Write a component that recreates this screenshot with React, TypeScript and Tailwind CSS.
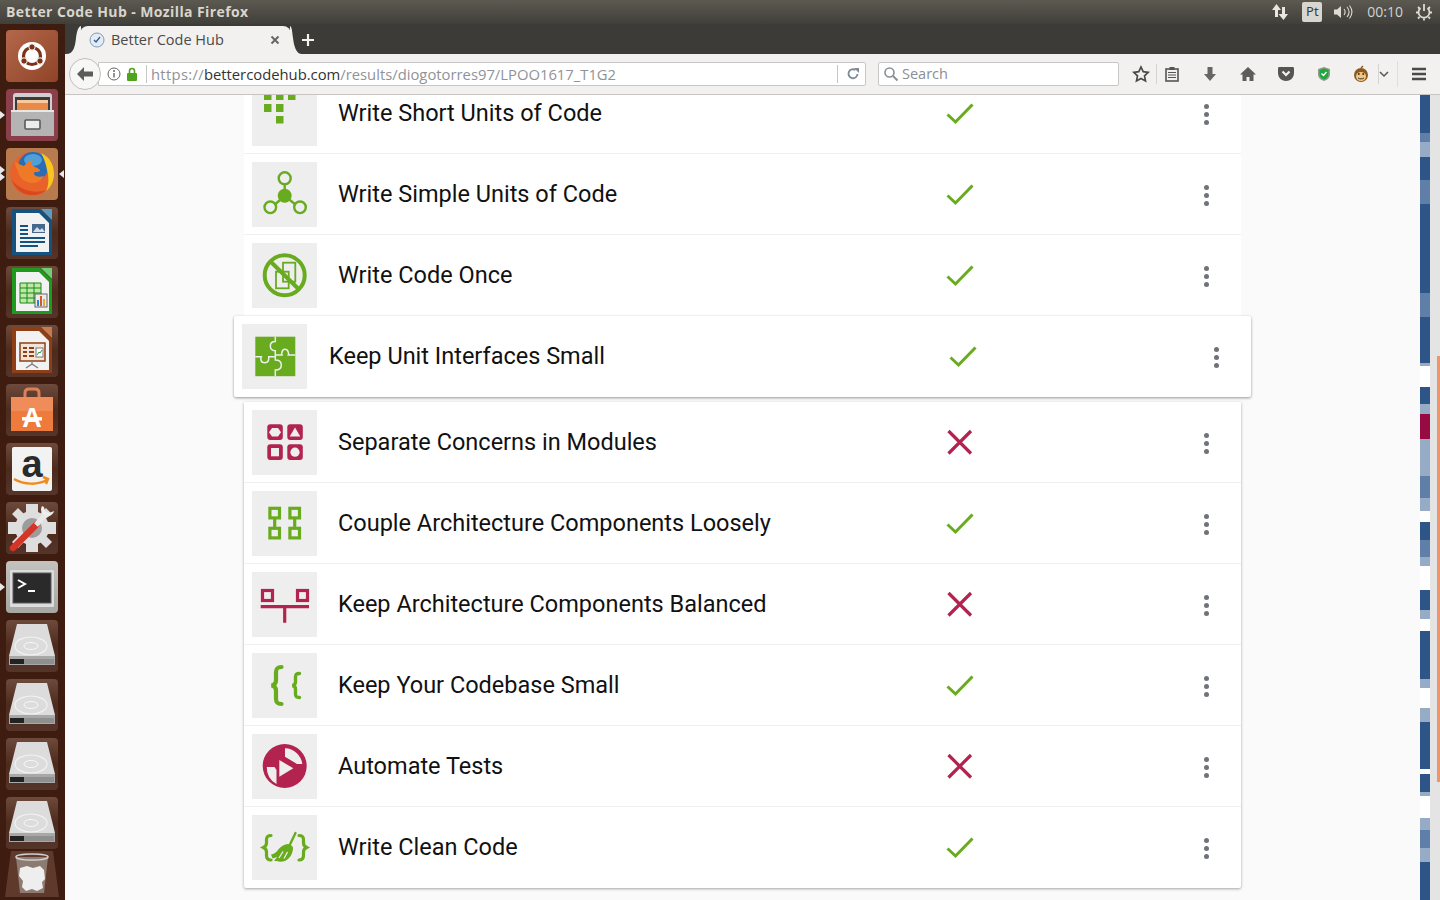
import React from "react";

const G = "#69ab1e";
const R = "#b3234f";
const B = "#eeeeee";

const seg: [string, number][] = [
  ["#2e5587", 38], ["#5f7fa8", 9], ["#96abc6", 15], ["#2e5587", 23], ["#5f7fa8", 24], ["#2e5587", 89], ["#5f7fa8", 24], ["#2e5587", 46], ["#96abc6", 3], ["#ffffff", 21], ["#2e5587", 17], ["#96abc6", 10], ["#970a42", 25], ["#96abc6", 37], ["#5f7fa8", 22], ["#96abc6", 13], ["#ffffff", 11], ["#2e5587", 18], ["#5f7fa8", 17], ["#96abc6", 9], ["#ffffff", 24], ["#2e5587", 20], ["#96abc6", 9], ["#ffffff", 12], ["#2e5587", 48], ["#96abc6", 9], ["#ffffff", 20], ["#96abc6", 14], ["#2e5587", 47], ["#ffffff", 5], ["#2e5587", 18], ["#96abc6", 4], ["#ffffff", 22], ["#96abc6", 12], ["#5f7fa8", 18], ["#96abc6", 14], ["#2e5587", 38],
];

function Svg({ children, s = 65 }: { children: React.ReactNode; s?: number }) {
  return <svg width={s} height={s} viewBox={`0 0 ${s} ${s}`} className="block">{children}</svg>;
}

const IShort = () => (
  <Svg>
    <g fill={G}>
      <rect x="12" y="11" width="7.5" height="8" /><rect x="24" y="11" width="7.5" height="8" /><rect x="36" y="11" width="7.5" height="8" />
      <rect x="12" y="23" width="7.5" height="8" /><rect x="24" y="23" width="7.5" height="8" /><rect x="24" y="35" width="7.5" height="7.5" />
    </g>
  </Svg>
);
const ISimple = () => (
  <Svg>
    <g stroke={G} strokeWidth="2.4" fill="none">
      <path d="M32.7 22.5V34M32.7 34L22.8 42.5M32.7 34L43.5 42.5" />
      <circle cx="32.7" cy="16.3" r="6" /><circle cx="18.3" cy="45.3" r="5.8" /><circle cx="48" cy="45.3" r="5.8" />
    </g>
    <circle cx="32.7" cy="33.7" r="7" fill={G} />
  </Svg>
);
const IOnce = () => (
  <Svg>
    <g stroke={G} fill="none">
      <rect x="31" y="19.7" width="12.3" height="19" strokeWidth="1.8" />
      <rect x="24" y="28.7" width="12.7" height="16.6" strokeWidth="1.8" />
      <circle cx="32.7" cy="32.3" r="20" strokeWidth="4" />
      <path d="M18.5 18.5L47 46.5" strokeWidth="4" />
    </g>
  </Svg>
);
const IPuzzle = () => (
  <Svg>
    <rect x="13.3" y="12.7" width="40" height="39.5" fill={G} />
    <path d="M33.3 12.7V17.5c-1.500 0-5 .5-5 4.500s3.500 4.700 5 4.700V36c1.500 0 6 .5 6 5s-4.500 5-6 5v6.200M13.300 32.700h6c-.5 1-1.500 6 3.400 6s4-5 4-6h6.600M33.300 31h6.700c-.5-1-.5-5.700 3-5.700s3.800 4.700 3.300 5.700h7" fill="none" stroke={B} strokeWidth="1.500" />
  </Svg>
);
const IModules = () => (
  <Svg>
    <rect x="15.300" y="14.300" width="15.500" height="15.700" rx="3" fill={R} />
    <rect x="35.300" y="14.300" width="15.500" height="15.700" rx="3" fill={R} />
    <rect x="15.300" y="34.300" width="15.500" height="15.700" rx="3" fill={R} />
    <rect x="35.300" y="34.300" width="15.500" height="15.700" rx="3" fill={R} />
    <path d="M20 18h6l3 4.200-3 4.200h-6l-3-4.200z" fill={B} />
    <path d="M43 17.500l5.300 9h-10.600z" fill={B} />
    <rect x="19" y="38" width="8" height="8.300" fill={B} />
    <circle cx="43" cy="42.200" r="4.600" fill={B} />
  </Svg>
);
const ICouple = () => (
  <Svg>
    <g stroke={G} strokeWidth="3.200" fill="none">
      <rect x="17.900" y="17.300" width="9.600" height="9.600" />
      <rect x="37.900" y="17.300" width="9.600" height="9.600" />
      <rect x="17.900" y="37.300" width="9.600" height="9.600" />
      <rect x="37.900" y="37.300" width="9.600" height="9.600" />
      <path d="M22.700 27V37M42.700 27V37" />
    </g>
  </Svg>
);
const IBalanced = () => (
  <Svg>
    <g stroke={R} fill="none">
      <rect x="10.500" y="18.500" width="10" height="10" strokeWidth="3.200" />
      <rect x="45.500" y="18.500" width="10" height="10" strokeWidth="3.200" />
      <path d="M8.700 34.700H57M32.700 35V50.700" strokeWidth="3.200" />
    </g>
  </Svg>
);
const IBraces = () => (
  <Svg>
    <g stroke={G} fill="none" strokeLinecap="round">
      <path d="M29.500 14c-4.500 0-5.500 1.500-5.500 5.500v8c0 3-1.500 4.500-4.500 5 3 .5 4.500 2 4.500 5v8c0 4 1 5.500 5.500 5.500" strokeWidth="4.200" />
      <path d="M47.500 20.500c-3 0-4 1-4 3.500v5c0 2-1 3-3 3.500 2 .5 3 1.500 3 3.500v5c0 2.500 1 3.500 4 3.500" strokeWidth="3.400" />
    </g>
  </Svg>
);
const ITests = () => (
  <Svg>
    <circle cx="32.700" cy="32" r="22" fill={R} />
    <path d="M33 14.300A18 18 0 0 1 50.300 30L45 30L33 22.700z" fill={B} />
    <path d="M14.800 33H22.500L24.500 36V50A18 18 0 0 1 14.800 33z" fill={B} />
    <path d="M27.300 26L41.300 34.300L27.300 42.700z" fill={B} />
  </Svg>
);
const IClean = () => (
  <Svg>
    <g stroke={G} fill="none" strokeLinecap="round" strokeWidth="3.200">
      <path d="M19 20.500c-3 0-4.500 1-4.500 4v3.500c0 2-1 3.500-3 4.500 2 1 3 2.500 3 4.500v3.500c0 3 1.500 4.500 4.500 4.500" />
      <path d="M47 20.500c3 0 4.500 1 4.500 4v3.500c0 2 1 3.500 3 4.500-2 1-3 2.500-3 4.500v3.500c0 3-1.500 4.500-4.500 4.500" />
      <path d="M43.500 18L37 31.500" strokeWidth="2.400" />
    </g>
    <path d="M36 29c2.500 .5 5 2 5 4 0 5-3 11-8 13-3 1-8 1-11-.5l3.500-3.500-5 1.500-1.500-4c3-.5 5-2 6.500-4 3-4 7-6.500 10.500-6.500z" fill={G} />
    <path d="M31 36.500l-4 6.500M35.500 37l-3.500 6.500" stroke={B} strokeWidth="1.300" />
  </Svg>
);

function Check() {
  return (
    <svg width="28" height="22" viewBox="0 0 28 22" className="block translate-y-[1px]">
      <path d="M1.500 11.500L9.500 19L26.500 1.500" stroke={G} strokeWidth="3" fill="none" />
    </svg>
  );
}
function Cross() {
  return (
    <svg width="28" height="26" viewBox="0 0 28 26" className="block">
      <path d="M2.500 2L25 24.500M25 2L2.500 24.500" stroke={R} strokeWidth="3.200" fill="none" />
    </svg>
  );
}
function Dots() {
  return (
    <div className="flex flex-col gap-[3px] translate-y-[1px]">
      <span className="w-[5px] h-[5px] rounded-full bg-[#6f7378]" />
      <span className="w-[5px] h-[5px] rounded-full bg-[#6f7378]" />
      <span className="w-[5px] h-[5px] rounded-full bg-[#6f7378]" />
    </div>
  );
}

function Row({ icon, label, ok, last }: { icon: React.ReactNode; label: string; ok: boolean; last?: boolean }) {
  return (
    <div className={`flex items-center h-[81px] pl-2 border-b ${last ? "border-transparent" : "border-[#f0f0f0]"}`}>
      <div className="w-[65px] h-[65px] bg-[#eeeeee] shrink-0">{icon}</div>
      <div className="ml-[21px] w-[608px] shrink-0 pt-[2px] text-[23.500px] text-[#111111] font-['Roboto',sans-serif]">{label}</div>
      <div className="w-[28px] shrink-0 flex justify-center">{ok ? <Check /> : <Cross />}</div>
      <div className="ml-[230px]"><Dots /></div>
    </div>
  );
}

/* ---------- launcher art ---------- */
const Pip = ({ cls }: { cls: string }) => <span className={`absolute w-0 h-0 border-y-[4px] border-y-transparent ${cls}`} />;
const Tile = ({ cls, children, pips }: { cls: string; children: React.ReactNode; pips?: React.ReactNode }) => (
  <div className={`relative w-[52px] h-[52px] rounded-[4px] flex items-center justify-center shrink-0 ${cls}`}>{children}{pips}</div>
);
const dark = "bg-[linear-gradient(180deg,#6d4a3c_0%,#4c2a1c_50%,#55352a_100%)]";

const Ubuntu = () => (
  <svg width="52" height="52" viewBox="0 0 52 52">
    <circle cx="26" cy="26" r="14" fill="#fff" />
    <circle cx="26" cy="26" r="8.500" fill="none" stroke="#7a3418" strokeWidth="3.200" />
    <circle cx="26" cy="17" r="3.200" fill="#7a3418" stroke="#fff" /><circle cx="18" cy="31" r="3.200" fill="#7a3418" stroke="#fff" /><circle cx="34" cy="31" r="3.200" fill="#7a3418" stroke="#fff" />
  </svg>
);
const Drawer = () => (
  <svg width="52" height="52" viewBox="0 0 52 52">
    <path d="M7 7c0-2 1-3 3-3h33c2 0 3 1 3 3v40H7z" fill="#cfcfcf" />
    <rect x="9" y="8" width="35" height="15" fill="#3a3a3a" />
    <rect x="11" y="11" width="31" height="3" fill="#f6c9a0" /><rect x="11" y="14" width="31" height="7" fill="#ea8a48" />
    <path d="M5 21H48V47H5z" fill="#b4b4b4" /><rect x="5" y="21" width="43" height="2" fill="#e6e6e6" />
    <rect x="19" y="31" width="15" height="9" rx="1" fill="#ececec" stroke="#5a5a5a" strokeWidth="1.600" />
  </svg>
);
const Firefox = () => (
  <svg width="52" height="52" viewBox="0 0 52 52">
    <circle cx="26" cy="26" r="22" fill="#e8622a" />
    <circle cx="27" cy="19" r="15" fill="#2a6db5" />
    <ellipse cx="27" cy="12" rx="9" ry="6" fill="#4f9fd8" />
    <path d="M35 5c9 4 13 12 13 21 0 7-3 13-8 17 3-6 3-14 1-21-1-6-3-12-6-17z" fill="#fac51f" />
    <path d="M9 13c0 4 1 7 3 10 1 7 7 12 14 12 6 0 10-3 12-7-3 1-6 1-8 0-2-1-3-3-1-4 2 0 5 0 5-2-3-3-7-3-9-6 0-2 1-3 2-4-4 1-7 3-9 6-3-1-6-2-9-5z" fill="#ee7a28" />
    <path d="M6 32c3 9 11 15 20 15 6 0 11-2 14-5-8 3-24 3-34-10z" fill="#d9481f" />
  </svg>
);
const Doc = ({ c, c2, children }: { c: string; c2: string; children: React.ReactNode }) => (
  <svg width="52" height="52" viewBox="0 0 52 52">
    <path d="M6 2H34L46 14V48H6z" fill={c} />
    <path d="M35 2L46 13V2z" fill={c2} />
    <path d="M10 6H33L43 16V45H10z" fill="#f2f2f2" />
    {children}
  </svg>
);
const Writer = () => (
  <Doc c="#15527f" c2="#5a9cc4">
    <rect x="26" y="17" width="13" height="9" fill="#44698c" /><path d="M27 25l4-5 3 3 2-2 3 4z" fill="#d8dfe6" />
    <path d="M14 18H22V20H14zM14 22H22V24H14zM14 26H22V28H14zM14 30H39V32H14zM14 34H39V36H14zM14 38H32V40H14z" fill="#15527f" />
  </Doc>
);
const Calc = () => (
  <Doc c="#1f9a1f" c2="#6fce6f">
    <path d="M14 17h21v20H14z" fill="#bfe7a8" stroke="#178a17" strokeWidth="1" />
    <path d="M14 22h21M14 27h21M14 32h21M21 17v20M28 17v20" stroke="#178a17" strokeWidth="1" />
    <rect x="29" y="28" width="12" height="13" fill="#ececec" stroke="#666" />
    <rect x="31" y="34" width="2" height="6" fill="#2a86c8" /><rect x="34" y="30" width="2" height="10" fill="#d8562a" /><rect x="37" y="33" width="2" height="7" fill="#e8b020" />
  </Doc>
);
const Impress = () => (
  <Doc c="#8e3f16" c2="#c77a4c">
    <rect x="14" y="18" width="25" height="18" fill="#f3e4d8" stroke="#8e3f16" strokeWidth="1.500" />
    <path d="M17 22h4v2h-4zM23 22h5v2h-5zM17 26h4v2h-4zM23 26h5v2h-5zM17 30h4v2h-4zM23 30h5v2h-5z" fill="#8e3f16" />
    <rect x="30" y="23" width="7" height="9" fill="#fff" stroke="#777" /><path d="M31 30l2-3 1 1 2-3" stroke="#2a9a3a" fill="none" />
    <path d="M26 36v3M26 39l-6 4M26 39l6 4" stroke="#777" strokeWidth="1.200" />
  </Doc>
);
const Store = () => (
  <svg width="52" height="52" viewBox="0 0 52 52">
    <path d="M19 14v-5c0-3 2-4 4-4h6c2 0 4 1 4 4v5" fill="none" stroke="#d9825a" strokeWidth="3" />
    <path d="M5 13H47V47H5z" fill="#ee7a3c" /><path d="M5 13H47V27H5z" fill="#f08c5a" />
    <text x="26" y="43" textAnchor="middle" fontFamily="'Liberation Sans',sans-serif" fontWeight="700" fontSize="27" fill="#fff">A</text>
    <rect x="16" y="33" width="20" height="3.500" fill="#fff" />
  </svg>
);
const Amazon = () => (
  <svg width="52" height="52" viewBox="0 0 52 52">
    <rect x="6" y="4" width="40" height="44" rx="2" fill="#f2f2f2" />
    <text x="26" y="34" textAnchor="middle" fontFamily="'Liberation Sans',sans-serif" fontWeight="700" fontSize="38" fill="#2a2a2a">a</text>
    <path d="M8 36c10 6 24 6 33 1M37 34l5 2-2 5" fill="none" stroke="#f08c1e" strokeWidth="2.500" />
  </svg>
);
const Settings = () => (
  <svg width="52" height="52" viewBox="0 0 52 52">
    <g fill="#dedede">
      <circle cx="26" cy="26" r="17" />
      <path d="M20 2h12v9H20zM20 41h12v9H20zM2 20h9v12H2zM41 20h9v12h-9zM6 12l6-6 8 8-6 6zM32 14l8-8 6 6-8 6zM6 40l6 6 8-8-6-6zM46 40l-6 6-8-8 6-6z" />
    </g>
    <circle cx="26" cy="26" r="10" fill="#9c9c9c" />
    <path d="M7 46L30 23" stroke="#d33527" strokeWidth="6.500" strokeLinecap="round" />
    <path d="M30 23L40 12" stroke="#e8e8e8" strokeWidth="5" />
    <path d="M36 4c-2 3-1 8 3 10 4 1 8-1 9-5l-5 2-4-2-1-4z" fill="#ededed" />
  </svg>
);
const Term = () => (
  <svg width="52" height="52" viewBox="0 0 52 52">
    <rect x="4" y="9" width="44" height="37" rx="1" fill="#dcdcdc" />
    <rect x="7" y="12" width="38" height="30" fill="#2a2a2a" stroke="#5a5a5a" />
    <path d="M12 19l7 4-7 4" fill="none" stroke="#fff" strokeWidth="2" /><rect x="22" y="29" width="7" height="2" fill="#fff" />
  </svg>
);
const Disk = () => (
  <svg width="52" height="52" viewBox="0 0 52 52">
    <path d="M11 4H41L49 36H3z" fill="#dcdcdc" />
    <ellipse cx="25" cy="26" rx="16" ry="9" fill="none" stroke="#f2f2f2" strokeWidth="1.200" />
    <ellipse cx="25" cy="26" rx="7" ry="3.500" fill="none" stroke="#f8f8f8" />
    <path d="M3 36H49V45H3z" fill="#a8a8a8" /><rect x="4" y="39" width="14" height="5" fill="#222" /><rect x="18" y="39" width="30" height="5" fill="#8f8f8f" />
  </svg>
);
const Trash = () => (
  <svg width="54" height="46" viewBox="0 0 54 46">
    <path d="M6 0H48L54 46H0z" fill="#5f3a2c" />
    <path d="M11 6H43L39 42H15z" fill="#8d7a70" />
    <ellipse cx="27" cy="6" rx="16" ry="3" fill="none" stroke="#cfcfcf" strokeWidth="1.500" />
    <path d="M15 17l7-2 6 2 7-2 4 4 1 9-3 3 1 6-6 3-5-2-6 2-4-4 1-6-4-5z" fill="#eeeeee" />
  </svg>
);

export default function App() {
  const ui = "font-['Noto_Sans',sans-serif]";
  return (
    <div className={`w-[1440px] h-[900px] overflow-hidden flex flex-col bg-[#3c3b37] ${ui}`}>
      {/* title bar */}
      <div className="h-[24px] shrink-0 flex items-center pl-[6px] pb-[1px] bg-[linear-gradient(180deg,#5c5950,#403f3a)]">
        <span className="text-[14px] font-bold text-[#d9d5cc] font-['Open_Sans',sans-serif] tracking-[0.4px]">Better Code Hub - Mozilla Firefox</span>
        <div className="ml-auto flex items-center text-[#dfdbd2]">
          <svg width="18" height="20" viewBox="0 0 18 20" className="mr-[13px]"><path d="M5.500 2L1 8h3v7h3V8h3zM12.500 18l4.500-6h-3V5h-3v7H7.500z" fill="#e8e6e0" /></svg>
          <span className="w-[20px] h-[20px] rounded-[2px] bg-[#d9d6d0] text-[#3c3b37] text-[13px] flex items-center justify-center mr-[11px]">Pt</span>
          <svg width="20" height="16" viewBox="0 0 20 16" className="mr-[14px]"><path d="M1 5.500H4L8 2V14L4 10.500H1z" fill="#dfdbd2" /><path d="M11 5c1.500 2 1.500 4 0 6M14 3c2.500 3 2.500 7 0 10M16.500 1.500c3 4 3 9 0 13" stroke="#dfdbd2" fill="none" strokeWidth="1.100" /></svg>
          <span className="text-[14px] font-['Open_Sans',sans-serif] text-[#cfd3d8] mr-[12px]">00:10</span>
          <svg width="18" height="18" viewBox="0 0 18 18" className="mr-[7px]"><g stroke="#dfdbd2" fill="none" strokeWidth="1.800"><path d="M5.500 5A5.500 5.500 0 1 0 12.500 5" /><path d="M9 1V8" /><path d="M1 9.500H3M15 9.500h2M3 4l1.500 1.500M13.500 5.500L15 4M3 15.500l1.500-1.500M13.500 14l1.500 1.500M9 15.500v2" /></g></svg>
        </div>
      </div>

      <div className="flex-1 flex min-h-0">
        {/* launcher */}
        <div className="w-[65px] shrink-0 flex flex-col items-center gap-[7px] pt-[6px] pr-[1px] bg-[#3e1c10]">
          <Tile cls="bg-[linear-gradient(135deg,#b4674a,#8f4428)]"><Ubuntu /></Tile>
          <Tile cls="bg-[#8a3f4a]" pips={<Pip cls="-left-[6px] top-[22px] border-l-[5px] border-l-[#e8e8e8]" />}><Drawer /></Tile>
          <Tile cls="bg-[#b97a4e]" pips={<><Pip cls="-left-[6px] top-[18px] border-l-[5px] border-l-[#e8e8e8]" /><Pip cls="-left-[6px] top-[25px] border-l-[5px] border-l-[#e8e8e8]" /><Pip cls="-right-[6px] top-[22px] border-r-[5px] border-r-[#e8e8e8]" /></>}><Firefox /></Tile>
          <Tile cls={dark}><Writer /></Tile>
          <Tile cls={dark}><Calc /></Tile>
          <Tile cls={dark}><Impress /></Tile>
          <Tile cls={dark}><Store /></Tile>
          <Tile cls={dark}><Amazon /></Tile>
          <Tile cls={dark}><Settings /></Tile>
          <Tile cls="bg-[linear-gradient(180deg,#c4c2be,#a8a6a2)]" pips={<Pip cls="-left-[6px] top-[22px] border-l-[5px] border-l-[#e8e8e8]" />}><Term /></Tile>
          <Tile cls={dark}><Disk /></Tile>
          <Tile cls={dark}><Disk /></Tile>
          <Tile cls={dark}><Disk /></Tile>
          <Tile cls={dark}><Disk /></Tile>
          <div className="-mt-[5px] shrink-0"><Trash /></div>
        </div>

        <div className="flex-1 flex flex-col min-w-0">
          {/* tab strip */}
          <div className="h-[30px] shrink-0 flex items-end pl-[15px]">
            <div className="relative w-[211px] h-[28px] bg-[#f2f1ef] rounded-t-[8px] flex items-center pl-[9px] pr-[11px]">
              <svg width="15" height="28" viewBox="0 0 15 28" className="absolute -left-[14px] bottom-0"><path d="M15 0V28H0C8 28 9 20 10 12 11 5 12 1 15 0z" fill="#f2f1ef" /></svg>
              <svg width="12" height="28" viewBox="0 0 12 28" className="absolute -right-[11px] bottom-0"><path d="M0 0V28H12C6 28 4 20 3 12 2 5 2 1 0 0z" fill="#f2f1ef" /></svg>
              <svg width="16" height="16" viewBox="0 0 16 16" className="shrink-0"><circle cx="8" cy="8" r="7" fill="#e3ecf4" stroke="#7f9cb8" /><path d="M5 8l2 2 4-5" stroke="#2f5d8c" fill="none" strokeWidth="1.300" /></svg>
              <span className="ml-[6px] text-[14.500px] text-[#4a4a4a] font-['Open_Sans',sans-serif]">Better Code Hub</span>
              <svg width="10" height="10" viewBox="0 0 10 10" className="ml-auto"><path d="M1.500 1.500l7 7M8.500 1.500l-7 7" stroke="#666" strokeWidth="2" /></svg>
            </div>
            <svg width="14" height="14" viewBox="0 0 14 14" className="ml-[10px] mb-[7px]"><path d="M7 1V13M1 7H13" stroke="#f2f1ef" strokeWidth="2.200" /></svg>
          </div>

          {/* toolbar */}
          <div className="h-[41px] shrink-0 bg-[#f2f1ef] border-b border-[#c6c5c3] flex items-center pl-[4px] font-['Open_Sans',sans-serif]">
            <div className="w-[32px] h-[32px] rounded-full bg-[#f7f7f6] border border-[#c0bfbd] flex items-center justify-center z-10 shrink-0">
              <svg width="16" height="14" viewBox="0 0 16 14"><path d="M7 0L0 7l7 7V9.500h9v-5H7z" fill="#5c5c5c" /></svg>
            </div>
            <div className="-ml-[3px] w-[768px] h-[24px] bg-white border border-[#c8c7c5] rounded-r-[2px] flex items-center pl-[8px] shrink-0">
              <svg width="14" height="14" viewBox="0 0 14 14" className="shrink-0"><circle cx="7" cy="7" r="6" fill="none" stroke="#666" /><path d="M7 6v4.500" stroke="#666" strokeWidth="1.400" /><circle cx="7" cy="4" r="1" fill="#666" /></svg>
              <svg width="12" height="14" viewBox="0 0 12 14" className="ml-[5px] shrink-0"><rect x="1" y="6" width="10" height="8" rx="1" fill="#4fa41d" /><path d="M3.500 6V4a2.500 2.500 0 0 1 5 0v2" fill="none" stroke="#4fa41d" strokeWidth="1.600" /></svg>
              <span className="w-px h-[18px] bg-[#c8c7c5] ml-[8px] shrink-0" />
              <span className="ml-[4px] text-[14.800px] text-[#8f9399] whitespace-nowrap"><span className="tracking-[0.3px]">https://</span><span className="text-[#333333]">bettercodehub.com</span>/results/diogotorres97/LPOO1617_T1G2</span>
              <span className="ml-auto w-px h-[18px] bg-[#c8c7c5] shrink-0" />
              <svg width="14" height="14" viewBox="0 0 14 14" className="ml-[8px] mr-[5px] shrink-0"><path d="M11.500 7A4.500 4.500 0 1 1 9.500 3" fill="none" stroke="#7f8a94" strokeWidth="1.800" /><path d="M8 1h5v5z" fill="#7f8a94" /></svg>
            </div>
            <div className="ml-[12px] w-[241px] h-[24px] bg-white border border-[#c8c7c5] rounded-[2px] flex items-center pl-[4px] shrink-0">
              <svg width="16" height="16" viewBox="0 0 16 16"><circle cx="6.500" cy="6.500" r="4.500" fill="none" stroke="#8a8f94" strokeWidth="1.600" /><path d="M10 10l4.500 4.500" stroke="#8a8f94" strokeWidth="2" /></svg>
              <span className="ml-[3px] text-[14.500px] text-[#8a8f94]">Search</span>
            </div>
            <div className="ml-[13px] flex items-center">
              <svg width="18" height="18" viewBox="0 0 18 18"><path d="M9 2l2.200 4.700 5 .6-3.700 3.500 1 5.100L9 13.400l-4.500 2.500 1-5.100L1.800 7.300l5-.6z" fill="none" stroke="#4a4a4a" strokeWidth="1.700" /></svg>
              <span className="w-px h-[20px] bg-[#d4d3d1] ml-[6px]" />
              <svg width="16" height="16" viewBox="0 0 16 16" className="ml-[7px]"><rect x="2" y="3" width="12" height="12" fill="none" stroke="#555" strokeWidth="1.600" /><rect x="5.500" y="1" width="5" height="3" fill="#555" /><path d="M4 6.500h8M4 9h8M4 11.500h8" stroke="#555" /></svg>
              <svg width="16" height="16" viewBox="0 0 16 16" className="ml-[22px]"><path d="M5.500 1h5v7H14l-6 7-6-7h3.500z" fill="#666" /></svg>
              <svg width="18" height="16" viewBox="0 0 18 16" className="ml-[21px]"><path d="M9 1L1 8.500h2.500V15h4v-4h3v4h4V8.500H17z" fill="#5c5c5c" /></svg>
              <svg width="18" height="16" viewBox="0 0 18 16" className="ml-[20px]"><path d="M2.500 1h13c1 0 1.500.5 1.500 1.500V7c0 5-4 8-8 8s-8-3-8-8V2.500C1 1.500 1.500 1 2.500 1z" fill="#555" /><path d="M5.500 5.500L9 9l3.500-3.500" stroke="#f2f1ef" strokeWidth="2.200" fill="none" /></svg>
              <svg width="14" height="16" viewBox="0 0 14 16" className="ml-[21.500px]"><path d="M7 1l6 2v5c0 4-3 6-6 7-3-1-6-3-6-7V3z" fill="#8d9a8d" /><path d="M7 2.500l4.500 1.500v4c0 3-2 4.500-4.500 5.500-2.500-1-4.500-2.500-4.500-5.500V4z" fill="#1fa83a" /><path d="M4.500 7.500l2 2 3-3.500" stroke="#fff" strokeWidth="1.300" fill="none" /></svg>
              <svg width="18" height="18" viewBox="0 0 18 18" className="ml-[21.500px]"><circle cx="9" cy="10" r="7" fill="#8a5a20" /><ellipse cx="9" cy="11.500" rx="5" ry="4.500" fill="#f5c77e" /><circle cx="6.800" cy="9" r="1" fill="#333" /><circle cx="11.200" cy="9" r="1" fill="#333" /><path d="M6 13c2 1.200 4 1.200 6 0" stroke="#333" fill="none" /><path d="M9 3L11 1" stroke="#8a5a20" strokeWidth="1.500" /></svg>
              <span className="w-px h-[20px] bg-[#d4d3d1] ml-[8px]" />
              <svg width="10" height="7" viewBox="0 0 10 7"><path d="M1 1l4 4 4-4" stroke="#555" strokeWidth="1.500" fill="none" /></svg>
              <span className="w-px h-[26px] bg-[#dededc] ml-[8px]" />
              <svg width="16" height="14" viewBox="0 0 16 14" className="ml-[13px]"><path d="M1 2h14M1 7h14M1 12h14" stroke="#4a4a4a" strokeWidth="2.400" /></svg>
            </div>
          </div>

          {/* page */}
          <div className="flex-1 flex min-h-0 overflow-hidden bg-[#fafafa]">
            <div className="flex-1 min-w-0 overflow-hidden pl-[179px]">
              <div className="w-[997px] -mt-[22px]">
                <div className="bg-white">
                  <Row icon={<IShort />} label="Write Short Units of Code" ok />
                  <Row icon={<ISimple />} label="Write Simple Units of Code" ok />
                  <Row icon={<IOnce />} label="Write Code Once" ok last />
                </div>
                <div className="relative z-10 -mx-[10px] h-[81px] bg-white rounded-[2px] shadow-[0_1px_3px_rgba(0,0,0,0.4)] flex items-center pl-[8px]">
                  <div className="w-[65px] h-[65px] bg-[#eeeeee] shrink-0"><IPuzzle /></div>
                  <div className="ml-[22px] w-[620px] shrink-0 text-[23.500px] text-[#111111] font-['Roboto',sans-serif]">Keep Unit Interfaces Small</div>
                  <div className="w-[28px] shrink-0 flex justify-center -translate-y-[1px]"><Check /></div>
                  <div className="ml-[237px]"><Dots /></div>
                </div>
                <div className="mt-[5px] bg-white shadow-[0_1px_3px_rgba(0,0,0,0.35)] rounded-b-[2px]">
                  <Row icon={<IModules />} label="Separate Concerns in Modules" ok={false} />
                  <Row icon={<ICouple />} label="Couple Architecture Components Loosely" ok />
                  <Row icon={<IBalanced />} label="Keep Architecture Components Balanced" ok={false} />
                  <Row icon={<IBraces />} label="Keep Your Codebase Small" ok />
                  <Row icon={<ITests />} label="Automate Tests" ok={false} />
                  <Row icon={<IClean />} label="Write Clean Code" ok last />
                </div>
              </div>
            </div>
            <div className="w-[10px] shrink-0 flex flex-col">
              {seg.map(([c, h], i) => (
                <div key={i} className="w-full shrink-0" style={{ backgroundColor: c, height: h }} />
              ))}
            </div>
            <div className="w-[10px] shrink-0 bg-[#e4e4e4] pt-[261px] flex justify-end items-start">
              <div className="w-[3px] h-[426px] bg-[#f0946c]" />
            </div>
          </div>
        </div>
      </div>
    </div>
  );
}
